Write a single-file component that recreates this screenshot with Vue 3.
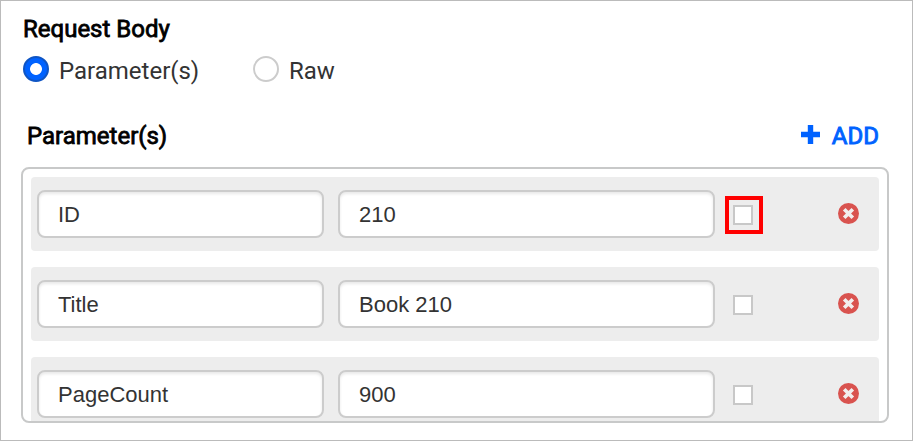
<script setup>
import { ref } from 'vue'

const mode = ref('params')
const rows = ref([
  { name: 'ID', value: '210', checked: false, highlight: true },
  { name: 'Title', value: 'Book 210', checked: false, highlight: false },
  { name: 'PageCount', value: '900', checked: false, highlight: false },
])
</script>

<template>
  <main class="frame">
    <h2 class="heading">Request Body</h2>
    <div class="modes">
      <label class="mode first">
        <input v-model="mode" class="radio" type="radio" value="params" />
        <span>Parameter(s)</span>
      </label>
      <label class="mode">
        <input v-model="mode" class="radio" type="radio" value="raw" />
        <span>Raw</span>
      </label>
    </div>
    <div class="bar">
      <h3 class="heading sub">Parameter(s)</h3>
      <button class="add" type="button">
        <svg class="plus" width="19" height="19" viewBox="0 0 19 19">
          <path d="M6.8 0h5.4v6.8H19v5.4h-6.8V19H6.8v-6.8H0V6.8h6.8z" fill="#0062ff" />
        </svg>
        <span class="add-label">ADD</span>
      </button>
    </div>
    <section class="list">
      <div v-for="row in rows" :key="row.name" class="row">
        <input v-model="row.name" class="field name" type="text" />
        <input v-model="row.value" class="field value" type="text" />
        <span class="mark" :class="{ highlight: row.highlight }">
          <input v-model="row.checked" class="check" type="checkbox" />
        </span>
        <svg class="remove" width="21" height="21" viewBox="0 0 21 21">
          <circle cx="10.5" cy="10.5" r="10.5" fill="#d9534f" />
          <path d="M6.2 6.2l8.6 8.6M14.8 6.2l-8.6 8.6" stroke="#f2eeee" stroke-width="3.7" />
        </svg>
      </div>
    </section>
  </main>
</template>

<style>
body {
  margin: 0;
  background: #fff;
}
</style>

<style scoped>
.frame {
  box-sizing: border-box;
  width: 913px;
  height: 441px;
  border: 1px solid #bbb;
  padding: 14px 23px 0 20px;
  overflow: hidden;
  font-family: Roboto, sans-serif;
  font-size: 24px;
  color: #333;
}
.heading {
  margin: 0 0 0 2px;
  font-size: 24px;
  line-height: 28px;
  font-weight: 400;
  -webkit-text-stroke: 0.8px currentColor;
  color: #000;
}
.modes {
  display: flex;
  margin: 12px 0 0 2px;
  height: 28px;
}
.mode {
  display: flex;
  gap: 10px;
  line-height: 32px;
}
.first {
  width: 230px;
}
.radio {
  appearance: none;
  box-sizing: border-box;
  width: 26px;
  height: 26px;
  margin: 1px 0 0;
  border: 2px solid #ccc;
  border-radius: 50%;
  background: #fff;
}
.radio:checked {
  border-color: #0f55c4;
  background: radial-gradient(circle, #fff 5.5px, #0062ff 6.3px);
}
.bar {
  display: flex;
  justify-content: space-between;
  align-items: center;
  height: 28px;
  margin: 39px 10px 0 6px;
}
.sub {
  margin: 0;
}
.add {
  display: flex;
  align-items: center;
  gap: 12px;
  padding: 0;
  border: 0;
  background: none;
  font: 400 24px/28px Roboto, sans-serif;
  color: #0062ff;
}
.add-label {
  -webkit-text-stroke: 0.9px currentColor;
}
.plus {
  margin-bottom: 3px;
}
.list {
  box-sizing: border-box;
  height: 256px;
  margin-top: 17px;
  padding: 8px;
  border: 2px solid #c8c9c9;
  border-radius: 8px;
  overflow: hidden;
}
.row {
  box-sizing: border-box;
  display: flex;
  align-items: center;
  height: 74px;
  margin-bottom: 16px;
  padding: 0 20px 0 6px;
  border-radius: 4px;
  background: #ededed;
}
.field {
  box-sizing: border-box;
  height: 48px;
  padding: 2px 19px 0;
  border: 2px solid #ccc;
  border-radius: 8px;
  background: #fff;
  box-shadow: inset 0 2px 3px rgba(0, 0, 0, 0.09);
  font: 22px "Liberation Sans", Arial, sans-serif;
  color: #333;
  outline: none;
}
.name {
  width: 287px;
  margin-right: 14px;
}
.value {
  width: 377px;
  margin-right: 10px;
}
.mark {
  box-sizing: border-box;
  display: flex;
  width: 38px;
  height: 38px;
  padding: 5px 4px;
  border: 4px solid transparent;
  margin-top: 2px;
}
.highlight {
  border-color: #f00;
}
.check {
  appearance: none;
  width: 20px;
  height: 20px;
  box-sizing: border-box;
  margin: 0;
  border: 2px solid #c8c8c8;
  background: #fff;
}
.remove {
  margin: 0 0 1px auto;
}
</style>
